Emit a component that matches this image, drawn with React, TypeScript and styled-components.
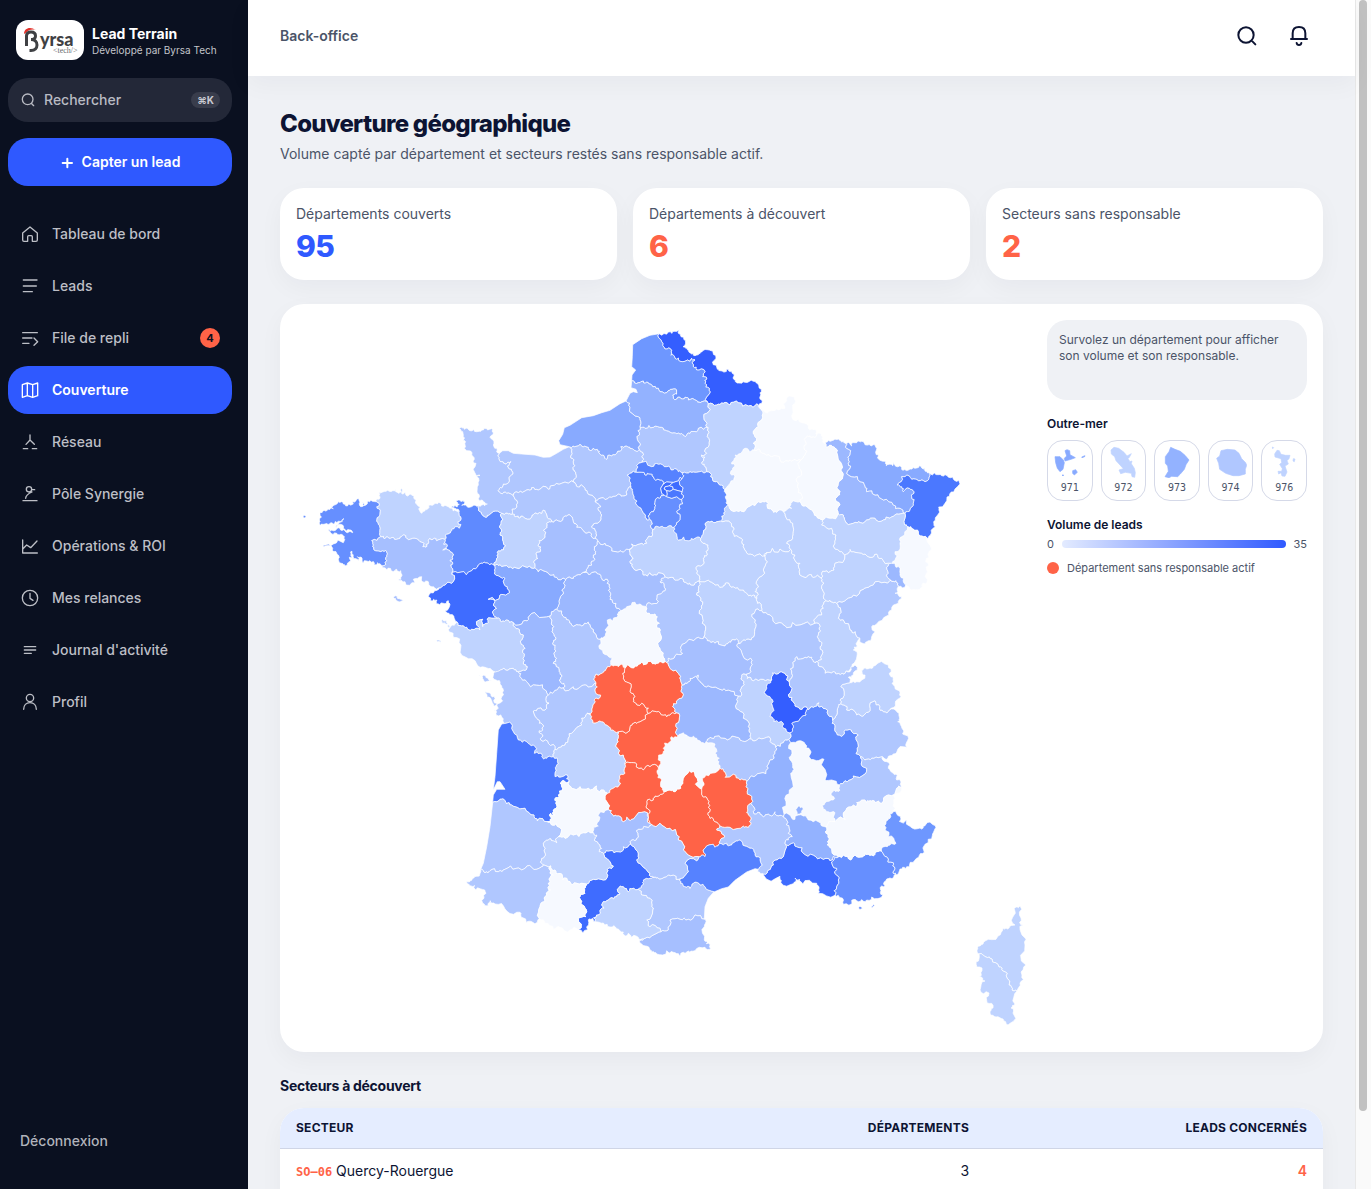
import React, { useMemo, useState } from 'react';
import styled, { createGlobalStyle } from 'styled-components';

const Global = createGlobalStyle`
  *, *::before, *::after { box-sizing: border-box; }
  body { margin: 0; font-family: Inter, "Liberation Sans", sans-serif; color: #0d1433; background: #eff1f5; }
  h1, h2, p, ul { margin: 0; padding: 0; }
  button { font: inherit; border: 0; cursor: pointer; }
  a { color: inherit; text-decoration: none; }
`;

const ink = '#0d1433';
const muted = '#4b5468';
const brand = '#2f59ff';
const coral = '#ff6347';

/* ---------- Map data ---------- */

const SHADES = ['#f6f9ff', '#bfd3ff', '#b0c7ff', '#a6bfff', '#9cb8ff', '#93b2ff', '#88aaff', '#6e97ff', '#668fff', '#5f8aff', '#5682ff', '#4b78ff', '#3f6cff', '#345eff'];

const LEVELS: Record<number, string> = {
  0: '08 51 55 68 36 15 26 04 47 65',
  1: '22 53 85 24 45 02 88 70 39 21 52 10 89 58 42 74 32 09 2A 2B',
  2: '50 14 61 86 17 16 18 27 60 25 71 01 73 43 05 30 11 64 40 81',
  3: '56 72 41 28 03 66 82',
  4: '79 37 54 90 63',
  5: '80 07 84',
  6: '76 57 49',
  7: '62 06',
  8: '29 83 91',
  9: '35 38 77',
  10: '34 78 95',
  11: '33 67 94',
  12: '44 31 13 92 93 75',
  13: '59 69',
};
const UNCOVERED = '87 23 19 46 12 48'.split(' ');

/* Borders, drawn on sheets at three units per map unit. Each line names the
   departments on both sides ("-" is sea or foreign land), then its points.
   "!" keeps a line smooth. */
type Sheet = { x: number; y: number; scale: number; lines: string };

const SHEETS: Sheet[] = [
  {
    x: 300, y: 320, scale: 3, lines: `
29 22 227 545 238 553 230 560 240 575 236 590 234 608 240 625 242 650
29 56 242 650 215 662 218 680 227 692 247 692 262 700 258 712 260 722 246 738
29 - 246 738 232 728 222 735 210 722 190 728 186 714 172 710 175 722 162 716 156 694 152 705 157 715 148 712 152 722 135 738 124 730 118 712 110 700 98 685 68 682 70 676 100 672 130 668 134 658 128 645 110 640 90 636 84 628 100 632 120 625 135 632 150 634 158 638 150 630 130 625 128 615 108 625 115 612 132 596 115 604 100 612 92 608 75 612 62 616 58 600 64 592 60 580 70 572 85 568 100 566 95 560 110 552 124 545 130 552 145 553 160 552 158 545 168 542 176 536 178 550 182 560 192 556 188 545 196 556 202 545 215 542 227 545
29 - 9 588 14 586 18 590 14 594 9 588
22 - 227 545 240 535 236 518 248 516 258 514 268 514 278 512 288 506 295 520 304 505 306 522 315 516 322 528 335 525 345 538 350 552 360 562 366 580 375 572 385 565 392 555 405 550 420 548 425 558 435 556 445 560 455 565 468 572 478 572
22 35 478 572 482 590 474 605 478 625 455 628 452 635 440 642 435 658
22 56 242 650 255 656 272 655 290 658 300 655 310 645 320 655 345 655 360 665 370 668 368 680 378 682 386 668 390 655 402 655 410 662 420 658 435 658
35 - 478 572 468 566 455 562 450 557 465 556 472 560 478 553 468 545 482 544 490 540 492 552 485 556 500 559 518 558 535 557
35 50 535 557 540 575 550 588 558 592 568 585 580 574 605 580
35 53 605 580 608 600 602 615 605 630 600 645 610 665 610 690 592 697 590 715 582 735
50 - 535 557 545 555 562 552 550 545 538 542 532 520 535 495 530 470 540 466 528 465 528 430 520 422 515 405 500 392 495 375 488 360 490 345 488 335 478 325 485 322 495 328 510 332 530 335 545 330 552 325 575 326 580 340 570 352 582 370 590 385 598 400
14 50 598 400 597 412 605 425 618 433 632 425 622 438 634 448 634 465 628 482 610 492 605 503 594 512 602 520 620 520 640 527
50 61 640 527 653 548 650 562 637 582
50 53 605 580 622 580 637 582
53 61 637 582 645 590 655 588 657 594 670 590 695 590 700 584 725 580 730 570 738 578 742 592 755 605
53 72 755 605 742 608 742 622 735 645 718 662 714 675 722 690 708 702 714 715 702 728 705 743
14 -! 598 400 608 392 625 392 640 400 665 402 705 405 730 412 750 411 770 400 790 388 808 380`,
  },
  {
    x: 530, y: 320, scale: 3, lines: `
14 27 118 380 125 392 122 408 130 425 130 450 137 460 130 480 135 488
14 61 -50 527 -28 514 -10 510 5 503 25 510 55 508 65 497 95 490 135 488
61 27 135 488 142 500 155 495 165 510 180 525 195 545
61 28 195 545 212 560 205 570 215 585 212 600 190 612 188 625 195 632 200 645 195 655
61 72 65 605 85 603 105 588 122 588 130 605 140 622 160 632 168 640 185 642 195 655
72 28 195 655 203 662
28 41 203 662 225 670 240 680 258 695 270 692 280 697 303 687
28 45 303 687 305 672 330 672 350 670 365 650 368 628
28 91 368 628 365 605 358 597
28 78 358 597 345 592 340 578 320 555 312 535 308 515 303 500
27 28 195 545 220 533 245 532 265 522 278 528 290 520 295 505 303 500
27 78 303 500 298 480 292 465 300 460 320 457
27 95 320 457 322 445 326 430
27 60 326 430 338 428 335 410 328 388
27 76 118 380 140 378 150 372 160 380 175 382 180 392 202 388 210 402 218 405 228 418 238 405 260 400 272 380 290 378 300 385 328 388
76 60 328 388 330 370 328 345 330 320
76 80 330 320 333 310 325 290 300 262 288 243
76 -! 118 380 90 374 86 362 98 343 103 323 120 316 155 293 190 287 215 278 240 271 270 251 288 243
80 60 330 320 345 325 370 322 395 322 410 332 432 338 450 342 466 350 480 340 500 335 505 325 535 323
80 -! 288 243 300 220 310 215 322 218 318 208 303 203 305 182
80 62 305 182 325 188 340 183 355 188 365 195 385 205 390 215 415 212 430 207 440 210 440 222 428 225 430 235 450 232 465 232 475 240 500 242 510 248 535 252
80 02 535 252 530 280 528 305 535 323
62 -! 305 182 306 165 317 150 305 140 307 110 308 74 335 56 360 46 388 41
62 59 388 41 395 65 405 87 425 92 422 105 435 115 450 124 480 124 485 115 495 120 490 140 500 150 525 155 518 170 530 175 525 190 538 205 535 225 535 252
59 - 388 41 415 36 435 34 449 26 453 50 461 58 459 80 471 85 481 99 495 107 505 104 515 96 538 90 551 104 554 120 561 144 570 152 590 147 606 154 613 165 616 181 625 189 645 187 670 184 686 196 694 208 690 230 697 243 688 263
59 02 535 252 560 255 580 250 600 255 625 248 655 258 680 252 688 262
02 08 688 262 698 272 695 300 685 320 670 340 675 350 670 370 672 390
02 51 672 390 658 395 640 388 635 397 615 405 612 420 605 432 615 435 608 450 605 465 615 468 600 490 584 508
02 60 535 323 532 350 538 375 530 400 515 405 525 412 515 430 525 440 530 455
60 77 530 455 500 457 480 455 458 458
60 95 458 458 445 455 430 450 410 440 385 433 365 440 326 430
02 77 530 455 540 458 542 470 555 485 570 495 584 508
77 51 584 508 586 530 590 545 596 556
77 10 596 556 586 562 585 575 575 588 578 605
77 89 578 605 555 608 540 607 525 612 520 640 512 655
77 45 512 655 495 655 475 662 445 660 440 645 432 635 432 622
77 91 432 622 445 605 442 580 448 560 455 538
77 94 455 538 456 515
77 93 456 515 456 476
77 95 456 476 458 458
95 78 320 457 345 465 360 462 370 470 390 480 400 492
78 92! 400 492 392 505 395 520 402 525
78 91 402 525 395 525 388 535 375 548 375 565 360 580 358 597
91 45 368 628 385 620 400 622 415 618 432 622
91 92! 402 525 410 530
91 94! 410 530 425 535 440 530 450 538 455 538
95 92! 400 492 410 485 430 487
95 93! 430 487 445 482 450 472 456 476
75 92! 418 497 405 500 402 507 410 512
75 93! 418 497 428 500 430 508
75 94! 430 508 420 514 410 512
92 93! 430 487 424 492 418 497
92 94! 410 512 412 522 410 530
93 94! 430 508 445 512 456 515`,
  },
  {
    x: 750, y: 380, scale: 3, lines: `
08 - 28 82 40 90 65 92 85 90 105 85 110 62 120 48 132 50 128 75 130 120 155 128 175 145 195 148 200 165
08 55 200 165 185 172 172 168 168 190 162 205 165 225 152 240
08 51 12 210 30 210 45 222 65 230 90 238 115 243 135 238 152 240
51 55 152 240 148 265 155 285 140 305 145 325 155 345 150 365
55 - 200 165 215 162 220 180 222 190
55 54 222 190 230 202 248 200 262 210 265 240 272 270 278 290 265 310 270 335 262 350 270 375 265 402
55 52 150 365 160 378 185 390 200 408 218 420
55 88 218 420 240 415 265 402
51 52 150 365 138 365 122 370 125 385 100 395
51 10 100 395 80 397 65 390 52 380 50 360 25 365 0 378 -18 395 -40 392 -64 376
10 52 100 395 108 412 128 430 130 455 128 475 110 490 122 508
10 21 122 508 90 507 85 517 50 518
21 52 122 508 135 525 150 550 148 575 175 585 190 592 213 594
52 70 213 594 215 580 235 578 252 570 255 550 285 525
52 88 285 525 270 515 255 490 258 465 248 462 245 445 215 435 218 420
68 88 425 550 435 540 435 515 450 490 455 470 473 440
68 67 473 440 490 447 505 455 515 468 530 480
68 - 530 480 537 515 527 545 530 570 525 590 532 600 515 615 510 628 485 630 467 615
67 88 473 440 463 432 465 400
88 54 265 402 280 405 285 422 310 430 325 425 350 420 375 415 400 420 420 415 440 402 465 400
57 54 290 190 290 205 300 225 295 240 302 258 292 275 305 290 330 305 345 318 350 335 375 345 400 360 430 375 450 385 465 400
57 67 465 400 480 390 490 370 485 350 492 335 478 325 460 335 455 320 442 315 455 290 465 290 485 298 505 302 525 305 535 300 540 282
57 - 290 190 305 198 320 188 335 184 345 194 370 194 381 205 386 225 406 244 409 257 428 257 430 247 450 257 458 271 480 267 500 264 508 257 525 264 526 274 540 281
54 - 222 190 235 181 250 181 265 177 280 184 290 190
67 - 540 281 565 284 575 287 585 284 608 291 626 301 611 336 591 351 566 381 569 396 556 421 556 441 541 466 530 482
`,
  },
  {
    x: 400, y: 540, scale: 3, lines: `
35 56 135 -2 130 12 142 18 128 30 145 30 155 37 158 48 150 60 158 70 154 82 155 103
56 - -54 78 -40 90 -20 95 -10 88 2 92 4 110 -5 120 15 125 45 128 40 118 65 110 68 125 85 125 95 140 105 145 122 143
56 - -20 172 -8 170 0 177 10 182 0 186 -10 182 -20 172
53 49 282 75 300 74 325 82 350 84 375 80 400 85 405 83
72 41 593 2 583 20 587 35 580 45 585 58 575 75 562 85 550 97
72 49 405 83 415 95 432 93 450 105 470 112 497 118
72 37 497 118 520 115 530 105 550 97
41 37 550 97 585 95 600 103 605 115 622 118 628 140 632 160 630 178 648 190 662 212
86 36 600 298 598 315 602 328 622 345 635 352 632 362 640 378
36 87 640 378 655 380 668 375 675 383
86 87 640 378 620 385 612 395 588 402 583 415 588 430
86 16 588 430 570 440 550 435 535 445 520 440 490 443
86 79 490 443 492 430 478 420 485 405 478 390 460 370 470 355 462 340 465 325 458 310 468 295 460 280 462 260 455 245 450 228
79 16 490 443 470 450 462 455 445 465
79 17 355 395 360 410 380 425 410 435 435 450 445 465
79 85 340 248 345 262 358 275 365 300 368 315 375 325 372 350 370 372 382 380 370 390 355 395
85 17 355 395 340 385 325 390 310 385 298 392
79 49 340 248 370 243 385 232 410 225 450 228
49 86 450 228 455 215 470 208
49 37 470 208 478 190 485 165 485 150 495 135 497 118
86 37 470 208 488 228 505 240 515 255 535 255 545 258 565 247 572 262 585 280 600 298
37 36 600 298 610 292 615 270 622 240 650 232 652 222 662 212
44 49 282 75 285 95 300 110 315 115 310 125 322 140 322 162 300 165 265 178 285 185 280 195 290 205 280 222 290 235
44 35 155 103 180 97 215 92 235 75 252 66 270 75 282 75
44 56 155 103 155 130 135 135 122 143
44 - 122 143 116 148 92 158 92 182 110 180 108 192 130 190 145 182 150 192 135 212 150 224 165 240 170 245
44 85 170 245 185 258 200 262 215 268 240 270 238 240 248 238 248 260 262 250 262 238 280 235 290 235
49 85 290 235 300 238 305 245 320 240 340 248
85 - 170 245 158 255 148 276 160 292 183 316 196 351 230 372 255 382 275 390 298 392
85 - 124 240 140 242 143 255 149 263 138 253 126 249 124 240
85 - 109 302 123 305 123 311 109 302
17 - 298 392 281 400 288 420 300 432 308 445 305 470 298 490 290 495 295 505 281 510 289 526 310 536 318 550
17 - 234 407 250 405 262 414 276 423 262 424 248 416 234 407
17 - 257 453 270 459 282 469 290 490 284 502 275 482 261 472 257 453
17 33 318 550 340 575 355 600 380 605 400 615 403 640 420 640 425 650 440 655 460 650
17 16 445 465 447 490 440 505 415 505 400 513 410 535 418 550 430 560 418 572 428 585 422 600 445 610 465 628
17 24 465 628 460 650
33 24 460 650 472 655 470 675 468 692 465 710 480 712 502 705 507 725
16 24 465 628 480 622 495 615 505 595 520 575 545 555 545 535 562 520
16 87 588 430 585 450 602 465 582 480 578 500 562 520
87 24 562 520 575 530 578 548 605 545 620 555 632 570 655 575
87 19 655 575 690 560 700 550 720 545 745 520
87 23 675 383 668 400 670 415 685 428 690 455 705 470 700 485 725 490 745 505 745 520
19 24 655 575 655 590 650 610 655 640 675 660 675 672`,
  },
  {
    x: 620, y: 540, scale: 3, lines: `
41 36 2 212 20 200 45 187 60 192 78 200
41 18 78 200 88 188 115 184 118 162 135 152 132 135 120 125 125 115 135 110
41 45 135 110 110 105 90 98 70 105 62 88 38 82 30 65 40 55 30 40 33 27
36 23 15 383 25 375 45 378 65 367 80 372 95 367 110 370 128 368
18 23 128 368 140 368
45 89 242 -5 255 10 265 25 262 45 250 55 252 70 228 82 235 105 237 123
45 18 135 110 155 112 170 120 190 118 200 130 215 135 225 128 237 123
18 58 237 123 236 145 230 165 242 182 245 205 248 235 257 260 252 290
89 58 237 123 260 122 270 125 285 135 300 142 315 135 320 128 340 140 365 150 380 160 395 168 410 175
58 21 410 175 412 190 425 205 425 212
58 71 425 212 405 215 400 235 408 260 402 290 380 298 365 305 345 300
58 03 252 290 262 302 285 310 295 305 315 318 325 308 335 300 345 300
18 03 252 290 235 292 215 300 190 312 182 325 188 340 165 348 145 355 140 368
18 36 78 200 88 220 105 222 108 240 118 250 112 265 120 280 118 305 120 325 128 345 128 368
19 23 85 520 110 515 130 525 150 525 170 518
23 63 170 518 158 500 170 490 185 475 183 455 187 435
23 03 187 435 182 420 175 400 155 390 145 375 140 368
63 03 187 435 205 425 210 415 222 412 235 405 240 425 250 435 270 440 300 448 325 450 355 468
03 42 355 468 365 465 365 440 372 425 365 405 380 402
03 71 345 300 358 310 352 320 365 338 392 355 392 380 380 402
42 71 380 402 382 415 400 422 430 418 455 420
42 69 455 420 445 430 438 450 450 470 455 490 450 530 462 545 490 550 492 565 508 578
71 69 455 420 458 398 470 402 490 398 495 400 500 420 508 425
71 01 508 425 515 400 520 375 530 350 555 352 575 352 580 365 592 365
01 69 508 425 505 465 520 485 530 500 550 502 565 508
69 38 565 508 558 525 525 545 515 550 520 562 508 578
01 38 565 508 580 502 597 488 610 505 625 525 638 540
01 73 638 540 650 525 655 500 662 490
01 74 662 490 668 475 662 440 690 428
01 39 592 365 600 380 615 400 640 395 650 402 672 403
01 - 672 403 690 395 705 375 712 382 700 405 685 412 690 428
74 - 690 428 710 425 735 405 725 400 730 387 750 384 765 377 805 375 808 400 818 410 816 430 832 450 843 470 826 490 808 510
74 73 662 490 672 495 680 510 705 515 720 525 735 522 750 505 765 482 780 500 790 515 808 510
73 - 808 510 832 517 839 535 833 545 846 565 864 588 857 615 861 622 830 637 810 647 795 657 787 650
73 38 638 540 645 555 650 578 670 585 682 570 700 580 715 585 715 615 712 625 722 650
73 05 722 650 740 658 762 655 787 650
26 38 512 608 540 602 555 612 570 630 570 655 590 662 612 658 615 720 635 720 658 735
42 38 508 578 506 598
42 07 506 598 490 608 467 622
38 07 506 598 512 608
42 43 388 597 410 600 440 592 455 610 467 622
07 43 467 622 465 640 450 660 445 685 420 700 395 708 380 725
15 43 258 605 285 612 285 640 298 655 295 670 300 685
43 63 258 605 270 592 290 588 315 595 345 590 360 600 388 597
63 42 355 468 350 490 362 515 370 535 385 560 392 580 388 597
63 15 175 588 190 578 210 592 230 595 245 608 258 605
63 19 170 518 178 540 172 565 175 588
19 15 175 588 155 590 150 605 130 625 130 640 115 660 115 683
19 46 115 683 90 680 70 690 50 672 30 668 15 672
10 89 308 -55 335 -40 338 -22 355 -10 365 5 372 25 385 43 410 45 440 38
89 21 440 38 442 65 430 90 412 120 415 140 405 155 410 175
21 70 603 114 612 130 608 150 612 165 618 182
21 39 618 182 610 205 605 225 585 250
71 21 425 212 450 225 478 248 500 263 540 255 585 250
71 39 585 250 600 260 600 275 592 290 602 305 600 320 605 345 592 365
70 39 618 182 630 180 640 188 650 190
70 25 650 190 680 178 700 165 730 148 750 138 785 128 820 124
25 39 650 190 662 210 655 235 670 240 690 270 705 275 720 295
39 - 720 295 712 318 700 330 712 342 702 370 690 388 672 403
25 - 835 140 832 145 825 160 845 170 835 190 815 210 800 228 770 252 755 260 755 290 740 305 728 310 720 295
70 88 675 45 685 38 690 28 715 38 735 42 750 52 770 42 785 55 815 70
70 90 815 70 805 78 805 100 812 120 820 124
90 68 815 70 825 70 840 85 840 105 852 130 857 135
25 90 820 124 832 128 835 140
90 - 835 140 857 135`,
  },
  {
    x: 460, y: 740, scale: 3, lines: `
24 46 495 72 495 100 480 115 482 130 460 145 442 160
46 47 442 160 435 178 445 205
46 82 445 205 455 222 470 228 485 242 500 232 515 238 530 225 562 218 565 232 568 250
46 15 595 83 592 100 605 120 602 140 610 152
46 12 610 152 608 162 585 168 580 180 560 185 558 200 570 212 565 235 568 250
12 15 610 152 630 150 645 155 662 145 668 125 688 92 705 105 712 115 720 145 725 148
12 82 568 250 574 253
82 81 574 253 565 262 540 268 530 275 530 295 515 300 512 312
12 81 574 253 600 250 630 265 650 285 655 300 670 330 685 345 715 350
81 34 715 350 710 362 675 370 682 378 680 400 664 415
34 11 664 415 662 430 675 440 690 445 700 430 720 435 735 440 762 455
81 31 512 312 525 325 535 345 530 360 555 385 570 400 582 412
31 11 582 412 570 415 550 420 548 435 535 447
11 81 582 412 595 415 612 412 640 405 664 415
31 09 535 447 520 445 505 455 490 440 475 445 480 460 470 470 450 475 430 485 432 505 420 515 410 525 405 545
09 11 535 447 545 465 570 475 575 490 578 510 560 540 570 560 600 565 603 575
11 66 603 575 625 570 630 540 660 538 685 538 705 525 735 538
66 - 735 538 733 560 733 600 739 611 752 626 735 622 705 632 690 637 670 637 658 647 640 637 620 632 590 642 575 637 567 622 545 612 540 600
09 66 603 575 580 585 555 595 540 600
09 - 405 545 430 549 450 561 470 566 490 576 500 587 505 580 530 589 548 596 540 600
31 - 405 545 398 535 385 540 383 569 354 569
31 65 354 569 355 535 378 530 380 515 368 495 365 485 355 475 375 460 372 445 380 432
32 65 380 432 350 430 330 425 308 420 305 402 288 400 285 390 272 378
32 31 380 432 400 418 430 420 440 400 445 385 460 378 445 360 430 340
31 82 430 340 450 332 475 335 490 320 512 312
32 82 430 340 418 335 420 315 402 300 410 285 400 278
32 47 400 278 370 278 340 285 315 295 295 290
32 40 295 290 290 308 280 302 265 300 250 310 255 340 245 355 250 375
40 47 295 290 298 262 275 255 262 245
47 82 400 278 400 262 415 258 418 240 422 215 440 210 445 205
47 24 327 125 335 145 360 140 385 145 410 138 410 150 430 150 442 160
47 33 327 125 315 125 300 130 308 145 295 165 285 175 290 195 280 210 285 225 272 220 275 235 262 245
33 40 262 245 232 243 222 225 195 205 165 200 155 195 140 192 135 182 120 178 98 187
33 -! 138 -50 125 -48 115 -30 110 40 105 110 100 150 112 125 120 125 135 148 110 148 100 165 98 187
40 -! 98 187 90 260 80 320 70 370 62 388
40 64 62 388 75 398 90 392 115 395 135 388 170 385 190 388 215 382 245 380 250 375
64 32 250 375 272 378
64 65 272 378 272 395 280 405 268 415 265 430 272 450 260 465 255 485 240 500 238 535
64 - 62 388 50 409 35 421 20 425 29 437 45 437 47 450 74 450 78 460 68 490 85 497 91 482 105 492 135 507 170 517 180 517 184 532 200 550 218 547 238 535
65 - 238 535 255 550 280 568 300 562 330 570 354 569`,
  },
  {
    x: 680, y: 740, scale: 3, lines: `
05 38 542 50 545 65 560 85 555 102 520 108 510 120 495 122 478 135
05 - 607 50 620 65 625 85 640 100 655 105 650 120 665 140
05 04 665 140 650 145 625 165 605 190 585 188 570 182 560 188 530 188 528 200 500 205 490 225 495 240 488 235 465 245
05 26 478 135 480 150 462 150 453 165 460 180 435 188 430 208 445 215 465 218 465 245
07 26 332 8 336 40 335 65 342 88 332 100 328 150 318 185 312 222
07 48 200 125 198 140 210 165 213 190
07 30 213 190 220 215 240 218 250 230 265 222 275 228 285 215 300 226 312 222
30 84 312 222 320 240 328 265 337 290 325 300 315 310
30 13 315 310 310 350 285 360 280 375 265 390 252 402
30 - 252 402 240 400 235 388
30 34 235 388 240 360 225 345 215 325 195 318 180 300 165 305 155 315 140 310 120 310
30 12 120 310 122 298 132 285 110 270 120 258
30 48 120 258 150 262 190 258 205 262 208 245 205 225 203 210 213 190
12 48 65 148 78 170 85 190 90 215 90 235 105 245 120 258
48 15 65 148 72 130 78 105 105 98 120 85
48 43 120 85 132 95 135 112 160 103 180 120 200 125
12 34 55 350 75 350 75 325 105 322 120 310
11 -! 102 455 85 475 75 500 73 538
34 -! 102 456 125 446 145 441 165 421 200 396 225 386 235 388
13 84 315 310 335 310 350 320 370 340 400 345 430 358 450 362 475 350
13 83 475 350 462 360 470 385 465 400 475 420 470 440 465 466
13 - 252 402 250 404 300 409 302 427 340 431 345 414 358 417 368 433 410 430 417 441 415 460 465 466
26 84 312 222 335 235 345 238 370 228 385 240 415 245 425 258 440 262
84 04 440 262 438 280 448 295 442 315 455 325 470 345 475 350
26 04 440 262 445 250 465 245
84 - 347 208 355 198 369 204 366 219 352 224 347 208
04 83 475 350 490 345 505 350 512 360 525 345 548 350 555 338 575 345 590 335 608 338
04 06 608 338 612 320 630 315 648 310 625 290 615 270 618 245 630 235 640 215
04 - 665 140 640 165 645 175 640 195 645 208 640 215
06 - 640 215 655 227 658 244 690 259 720 264 735 257 755 251 764 268 757 287 736 312 733 337 716 352 691 367 676 387 660 387 650 404
06 83 608 338 620 350 640 368 645 385 640 400 650 404
83 - 650 404 640 414 620 417 615 437 601 447 609 464 575 471 555 485 535 485 515 481 490 493 480 473 465 466
83 - 536 502 543 500 547 505 538 508 536 502
83 - 574 501 580 493 584 497 577 504 574 501`,
  },
  {
    x: 0, y: 0, scale: 1, lines: `
2B - 979 954 977 950 980 946 985 941 998 936 1003 928 1009 928 1015 925 1014 915 1016 907 1020 906 1021 918 1023 925 1022 935 1025 945 1026 965 1022 975 1020 983 1017 991
2A 2B 979 954 986 957 992 959 999 967 1003 971 1007 978 1009 985 1012 990 1017 991
2A - 979 954 976 962 982 968 979 977 985 981 980 990 989 993 987 1003 993 1008 990 1013 996 1017 1003 1019 1008 1025 1014 1015 1011 1008 1015 1004 1017 991`,
  },
];

type Pt = [number, number];

const hash = (x: number, y: number) => {
  const s = Math.sin(x * 12.9898 + y * 78.233) * 43758.5453;
  return s - Math.floor(s) - 0.5;
};

/* Midpoint displacement: gives straight pieces the ragged run of a real border. */
const roughen = (pts: Pt[], depth: number): Pt[] => {
  if (depth === 0) return pts;
  const out: Pt[] = [pts[0]];
  for (let i = 1; i < pts.length; i++) {
    const [ax, ay] = pts[i - 1];
    const [bx, by] = pts[i];
    const len = Math.hypot(bx - ax, by - ay);
    if (len > 2) {
      const k = hash(ax + bx, ay + by) * 0.7;
      out.push([(ax + bx) / 2 - (by - ay) * k, (ay + by) / 2 + (bx - ax) * k]);
    }
    out.push([bx, by]);
  }
  return roughen(out, depth - 1);
};

const near = (a: Pt, b: Pt) => Math.hypot(a[0] - b[0], a[1] - b[1]);

const buildShapes = () => {
  const byDept: Record<string, Pt[][]> = {};
  for (const sheet of SHEETS) {
    for (const line of sheet.lines.trim().split('\n')) {
      const [a, bRaw, ...nums] = line.trim().split(' ');
      const smooth = bRaw.endsWith('!');
      const pts: Pt[] = [];
      for (let i = 0; i < nums.length; i += 2) {
        pts.push([sheet.x + Number(nums[i]) / sheet.scale, sheet.y + Number(nums[i + 1]) / sheet.scale]);
      }
      const arc = smooth ? pts : roughen(pts, 2);
      for (const code of [a, bRaw.replace('!', '')]) {
        if (code !== '-') (byDept[code] = byDept[code] || []).push(arc);
      }
    }
  }
  return Object.entries(byDept).map(([code, arcs]) => {
    const rest = arcs.slice();
    const rings: Pt[][] = [];
    while (rest.length) {
      let ring = rest.shift()!.slice();
      for (;;) {
        const end = ring[ring.length - 1];
        let best = near(end, ring[0]);
        let pick = -1;
        let flip = false;
        rest.forEach((arc, i) => {
          if (near(arc[0], arc[arc.length - 1]) < 0.01) return;
          if (near(end, arc[0]) < best) { best = near(end, arc[0]); pick = i; flip = false; }
          if (near(end, arc[arc.length - 1]) < best) { best = near(end, arc[arc.length - 1]); pick = i; flip = true; }
        });
        if (pick < 0) break;
        const next = rest.splice(pick, 1)[0].slice();
        ring = ring.concat(flip ? next.reverse() : next);
      }
      rings.push(ring);
    }
    const d = rings.map((r) => 'M' + r.map((p) => p[0].toFixed(1) + ' ' + p[1].toFixed(1)).join('L') + 'Z').join('');
    return { code, d };
  });
};

const fillOf = (code: string) => {
  if (UNCOVERED.includes(code)) return coral;
  const level = Object.keys(LEVELS).find((k) => LEVELS[Number(k)].split(' ').includes(code));
  return SHADES[Number(level || 1)];
};

const OVERSEAS = [
  { code: '971', x: 57, fill: '#88aaff', d: 'M60 440L75 440L85 450L88 458L84 478L75 485L67 475L62 458ZM90 422L96 419L104 422L105 434L121 443L108 448L90 453L88 445L95 438ZM113 482L122 479L127 487L118 495L113 490ZM140 441L150 437L149 440L141 443ZM81 495L86 495L84 498Z' },
  { code: '972', x: 217, fill: '#bfd3ff', d: 'M229 420L238 412L252 415L268 427L277 438L290 431L284 442L280 446L286 455L292 453L290 461L299 475L302 488L300 502L292 500L290 490L272 487L258 491L253 480L266 476L256 465L244 452L240 440L230 432Z' },
  { code: '973', x: 378, fill: '#93b2ff', d: 'M407 412L420 418L436 424L450 436L462 450L453 464L448 478L436 492L428 500L410 499L402 503L390 500L400 484L398 468L391 460L391 440L402 425Z' },
  { code: '974', x: 538, fill: '#b0c7ff', d: 'M543 445L552 438L556 422L575 418L598 420L610 430L618 446L630 458L633 466L629 478L629 492L610 497L592 497L570 490L552 478L549 460Z' },
  { code: '976', x: 699, fill: '#bfd3ff', d: 'M719 432L726 421L733 422L738 433L752 436L765 436L762 446L756 452L760 462L750 468L756 486L750 499L741 498L738 488L731 492L729 484L740 484L742 476L734 463L740 458L738 446L720 441ZM775 446L780 447L778 455L774 453ZM712 411L716 413L713 416Z' },
];

/* ---------- Icons ---------- */

const ICONS = {
  home: 'M8 27L30 9L52 27V48Q52 52 48 52H37V38Q37 35 34 35H26Q23 35 23 38V52H12Q8 52 8 48Z',
  leads: 'M10 12H51M10 30H49M10 47H37',
  queue: 'M8 14H52M8 30H36M8 46H27M42 30L53 41L42 52',
  map: 'M7 14L22 9L38 14L53 9V47L38 52L22 47L7 52ZM22 9V47M38 14V52',
  network: 'M30 9V24M30 24L18 37M30 24L43 37M10 50H23M37 50H50',
  synergy: 'M35 16A8 8 0 1 1 19 16A8 8 0 1 1 35 16ZM35 17H44M36 24C24 29 17 34 17 43M9 50H51',
  chart: 'M8 12V51H52M9 38L20 27L32 35L51 15',
  clock: 'M53 30A23 23 0 1 1 7 30A23 23 0 1 1 53 30ZM30 16V31L39 37',
  journal: 'M13 20H47M13 30H47M13 40H34',
  user: 'M41 18A11 11 0 1 1 19 18A11 11 0 1 1 41 18ZM11 52C11 40 19 32 30 32S49 40 49 52',
};

const Stroke = styled.svg<{ $size: number; $weight: number }>`
  width: ${(p) => p.$size}px;
  height: ${(p) => p.$size}px;
  flex: none;
  fill: none;
  stroke: currentColor;
  stroke-width: ${(p) => p.$weight};
  stroke-linecap: round;
  stroke-linejoin: round;
`;

/* ---------- Shell ---------- */

const Shell = styled.div`
  display: flex;
  height: 100vh;
  overflow: hidden;
`;

const Sidebar = styled.aside`
  display: flex;
  flex-direction: column;
  flex: none;
  width: 248px;
  padding: 20px 16px 32px 8px;
  background: #0a1020;
  color: #fff;
`;

const Brand = styled.a`
  display: flex;
  align-items: center;
  gap: 8px;
  padding-left: 8px;
  margin-bottom: 18px;
`;

const BrandText = styled.span`
  padding-top: 2px;
`;

const LogoTile = styled.svg`
  width: 68px;
  height: 40px;
  flex: none;
  border-radius: 12px;
  background: #fff;
`;

const BrandName = styled.strong`
  display: block;
  font-size: 14px;
  line-height: 18px;
  font-weight: 700;
`;

const BrandNote = styled.span`
  display: block;
  font-size: 10px;
  line-height: 14px;
  color: #c3c5cb;
  white-space: nowrap;
`;

const SearchButton = styled.button`
  display: flex;
  align-items: center;
  gap: 8px;
  height: 44px;
  padding: 0 12px;
  border-radius: 20px;
  background: #232838;
  color: #b9bbc3;
  font-size: 14px;
  line-height: 20px;
  font-weight: 500;
  text-align: left;
`;

const Grow = styled.span`
  flex: 1;
`;

const Shortcut = styled.kbd`
  height: 16px;
  padding: 0 6px;
  border-radius: 8px;
  background: #393d4c;
  color: #c9cbd2;
  font: 700 10px/16px Inter, "DejaVu Sans", sans-serif;
`;

const Cta = styled.button`
  display: flex;
  align-items: center;
  justify-content: center;
  gap: 8px;
  height: 48px;
  margin: 16px 0 24px;
  border-radius: 20px;
  background: ${brand};
  color: #fff;
  font-size: 14px;
  line-height: 20px;
  font-weight: 600;
`;

const NavList = styled.nav`
  display: flex;
  flex-direction: column;
  gap: 4px;
  flex: 1;
`;

const NavLink = styled.a<{ $active?: boolean }>`
  display: flex;
  align-items: center;
  gap: 12px;
  height: 48px;
  padding: 0 12px;
  border-radius: 20px;
  background: ${(p) => (p.$active ? brand : 'transparent')};
  color: ${(p) => (p.$active ? '#fff' : '#bdbfc6')};
  font-size: 14px;
  line-height: 20px;
  font-weight: ${(p) => (p.$active ? 600 : 500)};
`;

const Badge = styled.span`
  width: 20px;
  height: 20px;
  border-radius: 50%;
  background: ${coral};
  color: #0a1020;
  font-size: 11px;
  line-height: 20px;
  font-weight: 700;
  text-align: center;
`;

const Logout = styled.button`
  align-self: flex-start;
  padding: 6px 12px;
  background: none;
  color: #b1b3bb;
  font-size: 14px;
  line-height: 20px;
  font-weight: 500;
`;

const Main = styled.div`
  display: flex;
  flex-direction: column;
  flex: 1;
  min-width: 0;
`;

const Topbar = styled.header`
  display: flex;
  align-items: center;
  flex: none;
  height: 76px;
  padding: 0 44px 4px 32px;
  background: #fff;
  box-shadow: 0 8px 24px rgba(13, 20, 51, 0.04);
  z-index: 1;
  color: ${muted};
  font-size: 14px;
  line-height: 20px;
  font-weight: 600;
`;

const IconButton = styled.button`
  display: flex;
  margin-left: 28px;
  padding: 0;
  background: none;
  color: ${ink};
`;

const Page = styled.main`
  display: flex;
  flex-direction: column;
  gap: 24px;
  flex: 1;
  min-height: 0;
  overflow-y: auto;
  scrollbar-width: none;
  padding: 32px;
  > * { flex: none; }
`;

const Rail = styled.div`
  flex: none;
  width: 16px;
  padding: 0 4px 0 3px;
  background: #fafafa;
  border-left: 1px solid #e8e8e8;
`;

const Thumb = styled.div`
  height: 93.4%;
  border-radius: 4px;
  background: #c1c1c1;
`;

/* ---------- Page parts ---------- */

const Title = styled.h1`
  font-size: 24px;
  line-height: 32px;
  font-weight: 800;
  letter-spacing: -0.03em;
`;

const Lead = styled.p`
  margin-top: 4px;
  font-size: 14px;
  line-height: 20px;
  color: ${muted};
`;

const Stats = styled.section`
  display: grid;
  grid-template-columns: repeat(3, 1fr);
  gap: 16px;
`;

const Card = styled.div`
  padding: 16px;
  border-radius: 24px;
  background: #fff;
  box-shadow: 0 8px 24px rgba(13, 20, 51, 0.04);
`;

const StatLabel = styled.p`
  font-size: 14px;
  line-height: 20px;
  color: ${muted};
`;

const StatValue = styled.p<{ $alert?: boolean }>`
  margin-top: 4px;
  font-size: 30px;
  line-height: 36px;
  font-weight: 800;
  letter-spacing: -0.02em;
  color: ${(p) => (p.$alert ? coral : brand)};
`;

const MapCard = styled(Card)`
  display: grid;
  grid-template-columns: minmax(0, 1fr) 260px;
  gap: 16px;
`;

const France = styled.svg`
  display: block;
  width: 100%;
  path {
    stroke: #fff;
    stroke-width: 0.7;
    stroke-linejoin: round;
  }
`;

const Legend = styled.aside`
  display: flex;
  flex-direction: column;
  gap: 16px;
`;

const Hint = styled.p`
  min-height: 80px;
  padding: 12px;
  border-radius: 20px;
  background: #eff1f5;
  font-size: 12px;
  line-height: 16px;
  color: ${muted};
`;

const LegendTitle = styled.h2`
  font-size: 12px;
  line-height: 16px;
  font-weight: 600;
`;

const Territories = styled.div`
  display: grid;
  grid-template-columns: repeat(5, 1fr);
  gap: 8px;
  margin-top: 8px;
`;

const Territory = styled.button`
  display: flex;
  flex-direction: column;
  align-items: center;
  gap: 3px;
  padding: 5px 0;
  border: 1px solid #d5d9e8;
  border-radius: 16px;
  background: #fff;
  color: ${muted};
  font: 10px/14px "DejaVu Sans Mono", monospace;
  svg { width: 32px; height: 32px; }
  path { stroke-width: 2; }
`;

const Scale = styled.div`
  display: flex;
  align-items: center;
  gap: 8px;
  margin: 4px 0 8px;
  font-size: 11px;
  line-height: 14px;
  color: ${muted};
`;

const Ramp = styled.div`
  flex: 1;
  height: 8px;
  border-radius: 4px;
  background: linear-gradient(90deg, #e3ebff, ${brand});
`;

const Note = styled.p`
  display: flex;
  align-items: center;
  gap: 8px;
  font-size: 11px;
  line-height: 18px;
  color: ${muted};
`;

const Dot = styled.span`
  width: 12px;
  height: 12px;
  border-radius: 50%;
  background: ${coral};
`;

const SectionTitle = styled.h2`
  margin-bottom: 12px;
  font-size: 14px;
  line-height: 20px;
  font-weight: 700;
  letter-spacing: -0.02em;
`;

const TableCard = styled(Card)`
  padding: 0;
  overflow: hidden;
`;

const Table = styled.table`
  width: 100%;
  border-collapse: collapse;
  font-size: 14px;
  line-height: 20px;
`;

const Th = styled.th<{ $end?: boolean; $width: string }>`
  width: ${(p) => p.$width};
  height: 40px;
  padding: 0 16px;
  border-bottom: 1px solid #cfd5e6;
  background: #e5edff;
  font-size: 12px;
  line-height: 16px;
  font-weight: 700;
  letter-spacing: 0.02em;
  text-transform: uppercase;
  text-align: ${(p) => (p.$end ? 'right' : 'left')};
`;

const Td = styled.td<{ $end?: boolean; $alert?: boolean }>`
  padding: 12px 16px;
  text-align: ${(p) => (p.$end ? 'right' : 'left')};
  color: ${(p) => (p.$alert ? coral : ink)};
  font-weight: ${(p) => (p.$alert ? 600 : 400)};
`;

const Code = styled.code`
  color: ${coral};
  font: 700 12px "DejaVu Sans Mono", monospace;
`;

const NAV: { label: string; icon: keyof typeof ICONS; badge?: number; active?: boolean }[] = [
  { label: 'Tableau de bord', icon: 'home' },
  { label: 'Leads', icon: 'leads' },
  { label: 'File de repli', icon: 'queue', badge: 4 },
  { label: 'Couverture', icon: 'map', active: true },
  { label: 'Réseau', icon: 'network' },
  { label: 'Pôle Synergie', icon: 'synergy' },
  { label: 'Opérations & ROI', icon: 'chart' },
  { label: 'Mes relances', icon: 'clock' },
  { label: "Journal d'activité", icon: 'journal' },
  { label: 'Profil', icon: 'user' },
];

const Logo = () => (
  <LogoTile viewBox="0 0 68 40" role="img" aria-label="Byrsa Tech">
    <path d="M8 14C8 8 14 6 20 10C16 9 12 10 11 12Z" fill="#e2322b" />
    <path d="M10.5 26V16C10.5 12.5 12.5 12 15 12C18 12 19.5 13.5 19.5 16S18 19.5 15 19.5C19 19.5 21 22 21 25S19 30.5 15 30.5H13.5" fill="none" stroke="#3f4144" strokeWidth="3" />
    <text x="24" y="26" fill="#3f4144" fontFamily="Lato, sans-serif" fontWeight="900" fontSize="18">yrsa</text>
    <text x="37" y="33" fill="#6a6c70" fontFamily="Liberation Serif, serif" fontSize="8">&lt;tech/&gt;</text>
  </LogoTile>
);

export default function App() {
  const shapes = useMemo(buildShapes, []);
  const [hovered, setHovered] = useState<string | null>(null);

  return (
    <>
      <Global />
      <Shell>
        <Sidebar>
          <Brand href="#">
            <Logo />
            <BrandText>
              <BrandName>Lead Terrain</BrandName>
              <BrandNote>Développé par Byrsa Tech</BrandNote>
            </BrandText>
          </Brand>
          <SearchButton type="button">
            <Stroke $size={16} $weight={4} viewBox="0 0 48 48" aria-hidden="true">
              <path d="M39 22A16 16 0 1 1 7 22A16 16 0 1 1 39 22ZM34 34L41 41" />
            </Stroke>
            <Grow>Rechercher</Grow>
            <Shortcut>⌘K</Shortcut>
          </SearchButton>
          <Cta type="button">
            <Stroke $size={14} $weight={6} viewBox="0 0 42 42" aria-hidden="true">
              <path d="M22 11V37M8 24H36" />
            </Stroke>
            Capter un lead
          </Cta>
          <NavList aria-label="Navigation principale">
            {NAV.map((item) => (
              <NavLink key={item.label} href="#" $active={item.active} aria-current={item.active ? 'page' : undefined}>
                <Stroke $size={20} $weight={4} viewBox="0 0 60 60" aria-hidden="true">
                  <path d={ICONS[item.icon]} />
                </Stroke>
                <Grow>{item.label}</Grow>
                {item.badge && <Badge>{item.badge}</Badge>}
              </NavLink>
            ))}
          </NavList>
          <Logout type="button">Déconnexion</Logout>
        </Sidebar>

        <Main>
          <Topbar>
            <Grow>Back-office</Grow>
            <IconButton type="button" aria-label="Rechercher">
              <Stroke $size={24} $weight={6} viewBox="0 0 72 72" aria-hidden="true">
                <path d="M56 33A23 23 0 1 1 10 33A23 23 0 1 1 56 33ZM50 50L61 61" />
              </Stroke>
            </IconButton>
            <IconButton type="button" aria-label="Notifications">
              <Stroke $size={24} $weight={6} viewBox="0 0 72 72" aria-hidden="true">
                <path d="M12 45H60M17 45V28C17 16 24 9 36 9S55 16 55 28V45M29 57C30 65 42 65 43 57" />
              </Stroke>
            </IconButton>
          </Topbar>

          <Page>
            <div>
              <Title>Couverture géographique</Title>
              <Lead>Volume capté par département et secteurs restés sans responsable actif.</Lead>
            </div>

            <Stats>
              <Card>
                <StatLabel>Départements couverts</StatLabel>
                <StatValue>95</StatValue>
              </Card>
              <Card>
                <StatLabel>Départements à découvert</StatLabel>
                <StatValue $alert>6</StatValue>
              </Card>
              <Card>
                <StatLabel>Secteurs sans responsable</StatLabel>
                <StatValue $alert>2</StatValue>
              </Card>
            </Stats>

            <MapCard>
              <France viewBox="296 320 735 716" role="img" aria-label="Carte des départements">
                {shapes.map((s) => (
                  <path
                    key={s.code}
                    d={s.d}
                    fill={fillOf(s.code)}
                    opacity={hovered && hovered !== s.code ? 0.85 : 1}
                    onMouseEnter={() => setHovered(s.code)}
                    onMouseLeave={() => setHovered(null)}
                  />
                ))}
              </France>
              <Legend>
                <Hint>Survolez un département pour afficher son volume et son responsable.</Hint>
                <div>
                  <LegendTitle>Outre-mer</LegendTitle>
                  <Territories>
                    {OVERSEAS.map((t) => (
                      <Territory key={t.code} type="button">
                        <svg viewBox={`${t.x} 408 96 96`} aria-hidden="true">
                          <path d={t.d} fill={t.fill} stroke={t.fill} />
                        </svg>
                        {t.code}
                      </Territory>
                    ))}
                  </Territories>
                </div>
                <div>
                  <LegendTitle>Volume de leads</LegendTitle>
                  <Scale>
                    <span>0</span>
                    <Ramp />
                    <span>35</span>
                  </Scale>
                  <Note>
                    <Dot />
                    Département sans responsable actif
                  </Note>
                </div>
              </Legend>
            </MapCard>

            <section>
              <SectionTitle>Secteurs à découvert</SectionTitle>
              <TableCard>
                <Table>
                  <thead>
                    <tr>
                      <Th $width="40%" scope="col">Secteur</Th>
                      <Th $width="27.6%" $end scope="col">Départements</Th>
                      <Th $width="32.4%" $end scope="col">Leads concernés</Th>
                    </tr>
                  </thead>
                  <tbody>
                    <tr>
                      <Td><Code>SO–06</Code> Quercy-Rouergue</Td>
                      <Td $end>3</Td>
                      <Td $end $alert>4</Td>
                    </tr>
                    <tr>
                      <Td />
                      <Td />
                      <Td />
                    </tr>
                  </tbody>
                </Table>
              </TableCard>
            </section>
          </Page>
        </Main>
        <Rail aria-hidden="true">
          <Thumb />
        </Rail>
      </Shell>
    </>
  );
}
